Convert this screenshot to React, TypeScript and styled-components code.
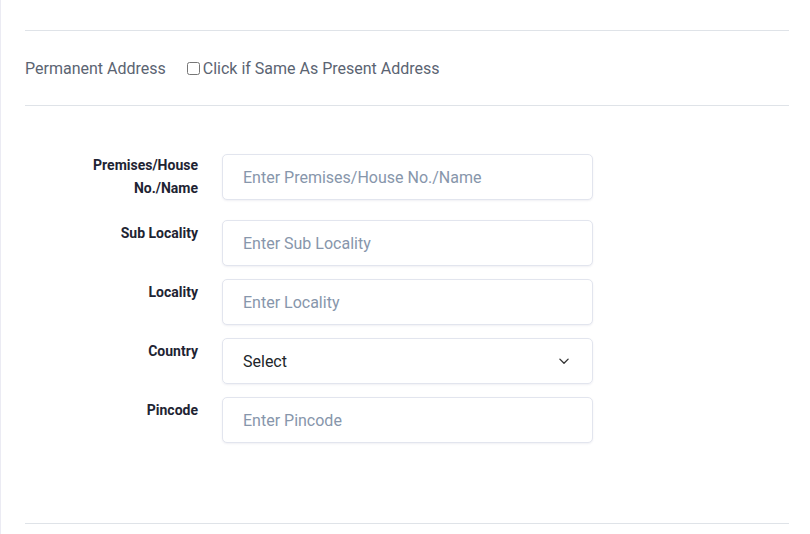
import styled, { createGlobalStyle } from 'styled-components';

const GlobalStyle = createGlobalStyle`
  body {
    margin: 0;
    background: #fff;
    font-family: Roboto, "Liberation Sans", sans-serif;
  }
`;

const Page = styled.div`
  min-height: 534px;
  border-left: 1px solid #ebebf3;
  padding: 30px 21px 0 24px;
  box-sizing: border-box;
`;

const Divider = styled.hr`
  margin: 0;
  border: none;
  border-top: 1px solid #dfe3e8;
`;

const HeaderRow = styled.div`
  display: flex;
  align-items: center;
  height: 74px;
  color: #5b6472;
  font-size: 16px;
`;

const Title = styled.span`
  margin-right: 21px;
`;

const CheckLabel = styled.label`
  display: flex;
  align-items: center;
  gap: 3px;
  cursor: pointer;

  input {
    margin: 0;
    width: 13px;
    height: 13px;
  }
`;

const Form = styled.div`
  display: flex;
  flex-direction: column;
  gap: 13px;
  padding: 48px 0 80px;
  border-bottom: 1px solid #dfe3e8;
`;

const Row = styled.div`
  display: grid;
  grid-template-columns: 173px 371px;
  column-gap: 24px;
  align-items: start;
`;

const Label = styled.label<{ $offset?: number }>`
  text-align: right;
  font-size: 14px;
  font-weight: 700;
  line-height: 23px;
  color: #1e2433;
  padding: 0 0 7px;
  margin-top: ${(p) => p.$offset ?? 2}px;
`;

const Input = styled.input`
  box-sizing: border-box;
  width: 100%;
  height: 46px;
  padding: 0 20px;
  border: 1px solid #e2e5ee;
  border-radius: 5px;
  box-shadow: 0 1px 2px rgba(60, 64, 120, 0.08);
  font-family: inherit;
  font-size: 16px;
  color: #212529;
  outline: none;

  &::placeholder {
    color: #8796ab;
  }
`;

const SelectBox = styled.div`
  box-sizing: border-box;
  height: 46px;
  padding: 0 22px 0 20px;
  border: 1px solid #e2e5ee;
  border-radius: 5px;
  box-shadow: 0 1px 2px rgba(60, 64, 120, 0.08);
  display: flex;
  align-items: center;
  justify-content: space-between;
  font-size: 16px;
  color: #212529;
`;

const fields = [
  { label: 'Premises/House No./Name', placeholder: 'Enter Premises/House No./Name', offset: 0 },
  { label: 'Sub Locality', placeholder: 'Enter Sub Locality' },
  { label: 'Locality', placeholder: 'Enter Locality' },
  { label: 'Country', select: true },
  { label: 'Pincode', placeholder: 'Enter Pincode' },
];

const App = () => {
  return (
    <>
      <GlobalStyle />
      <Page>
        <Divider />
        <HeaderRow>
          <Title>Permanent Address</Title>
          <CheckLabel>
            <input type="checkbox" />
            Click if Same As Present Address
          </CheckLabel>
        </HeaderRow>
        <Divider />
        <Form>
          {fields.map((f) => (
            <Row key={f.label}>
              <Label $offset={f.offset}>
                {f.label === 'Premises/House No./Name' ? (
                  <>
                    Premises/House
                    <br />
                    No./Name
                  </>
                ) : (
                  f.label
                )}
              </Label>
              {f.select ? (
                <SelectBox>
                  Select
                  <svg width="12" height="12" viewBox="0 0 16 16" fill="none">
                    <path d="M2.5 5.5 8 11l5.5-5.5" stroke="#333" strokeWidth="1.8" strokeLinecap="round" strokeLinejoin="round" />
                  </svg>
                </SelectBox>
              ) : (
                <Input placeholder={f.placeholder} />
              )}
            </Row>
          ))}
        </Form>
      </Page>
    </>
  );
};

export default App;
